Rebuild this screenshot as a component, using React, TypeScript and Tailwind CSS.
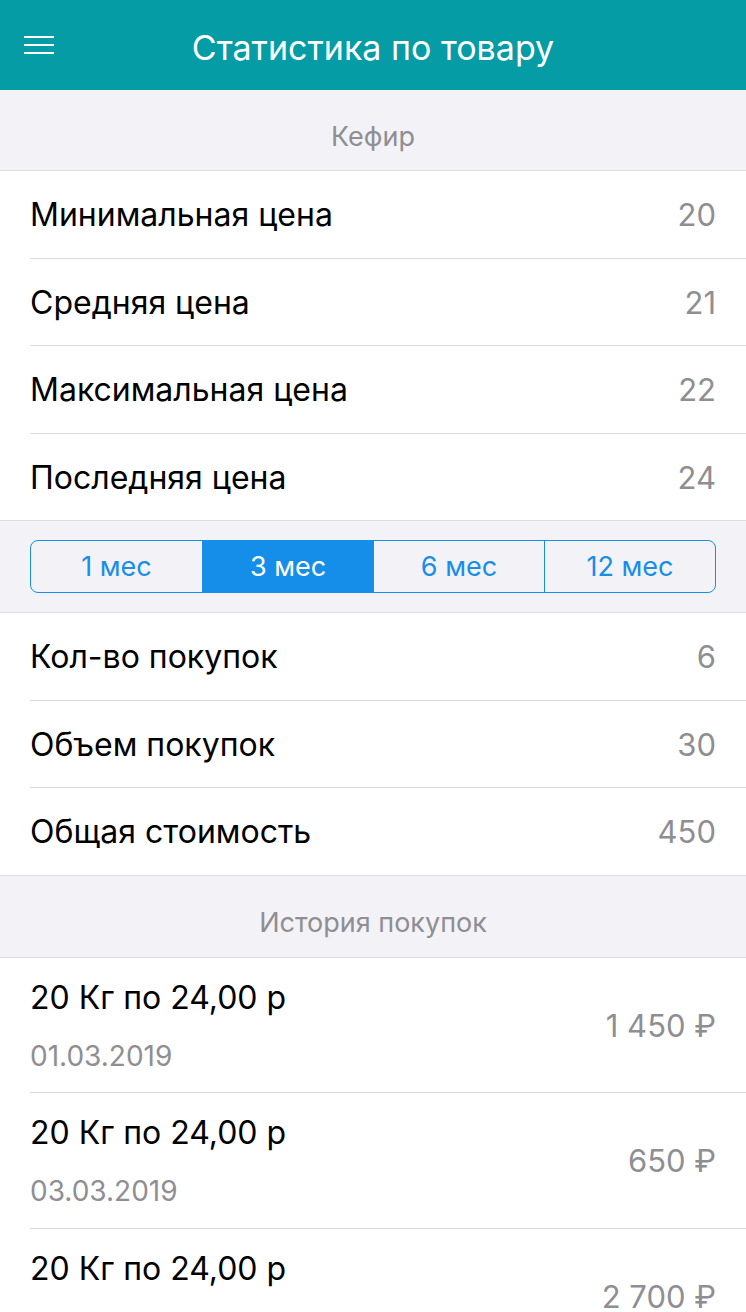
import React from 'react';

const font = { fontFamily: 'Inter, Roboto, "Noto Sans", sans-serif' };

const priceRows = [
    { label: 'Минимальная цена', value: '20' },
    { label: 'Средняя цена', value: '21' },
    { label: 'Максимальная цена', value: '22' },
    { label: 'Последняя цена', value: '24' },
];

const totalRows = [
    { label: 'Кол-во покупок', value: '6' },
    { label: 'Объем покупок', value: '30' },
    { label: 'Общая стоимость', value: '450' },
];

const history = [
    { title: '20 Кг по 24,00 р', date: '01.03.2019', sum: '1 450 ₽' },
    { title: '20 Кг по 24,00 р', date: '03.03.2019', sum: '650 ₽' },
    { title: '20 Кг по 24,00 р', date: '05.03.2019', sum: '2 700 ₽' },
];

const periods = ['1 мес', '3 мес', '6 мес', '12 мес'];

const SectionTitle: React.FC<{ text: string; h: string }> = ({ text, h }) => (
    <div className={`${h} bg-[#f3f3f7] border-b border-[#dcdce0] flex items-center justify-center`}>
        <span className="text-[27px] text-[#8e8e93] pt-[14px]">{text}</span>
    </div>
);

// последняя строка группы — линия на всю ширину
const Row: React.FC<{ label: string; value: string; last?: boolean }> = ({ label, value, last }) => (
    <div className={last ? 'pl-[30px] border-b border-[#dcdce0]' : 'pl-[30px]'}>
        <div className={`flex items-center justify-between pr-[30px] ${last ? 'h-[86.5px]' : 'h-[87.5px] border-b border-[#dcdce0]'}`}>
            <span className="text-[32px] text-black pt-[2px]">{label}</span>
            <span className="text-[31px] text-[#8e8e93] pt-[2px]">{value}</span>
        </div>
    </div>
);

export default function App() {
    return (
        <div className="w-[746px] h-[1312px] overflow-hidden bg-white" style={font}>
            {/* шапка */}
            <div className="h-[90px] bg-[#069ca6] flex items-center relative">
                <button className="absolute left-[24px] top-[36px] w-[30px] flex flex-col gap-[6px]">
                    <span className="block h-[2px] bg-white" />
                    <span className="block h-[2px] bg-white" />
                    <span className="block h-[2px] bg-white" />
                </button>
                <h1 className="w-full text-center text-[34px] text-white pt-[4px]">Статистика по товару</h1>
            </div>

            <SectionTitle text="Кефир" h="h-[81px]" />

            {priceRows.map((r, i) => (
                <Row key={r.label} {...r} last={i === priceRows.length - 1} />
            ))}

            {/* переключатель периода */}
            <div className="h-[92px] bg-[#f3f3f7] border-b border-[#dcdce0] px-[30px] pt-[19px]">
                <div className="h-[53px] grid grid-cols-4 border-[1.5px] border-[#1a8de6] rounded-[8px] overflow-hidden">
                    {periods.map((p, i) => (
                        <div
                            key={p}
                            className={`flex items-center justify-center text-[27px] pt-[2px] ${i > 0 ? 'border-l-[1.5px] border-[#1a8de6]' : ''} ${i === 1 ? 'bg-[#148ee8] text-white' : 'text-[#1a8de6]'}`}
                        >
                            {p}
                        </div>
                    ))}
                </div>
            </div>

            {totalRows.map((r, i) => (
                <Row key={r.label} {...r} last={i === totalRows.length - 1} />
            ))}

            <SectionTitle text="История покупок" h="h-[82px]" />

            {history.map((h) => (
                <div key={h.date} className="pl-[30px]">
                    <div className="h-[135.5px] flex items-start justify-between pr-[30px] border-b border-[#dcdce0]">
                        <div className="flex flex-col pt-[21px]">
                            <span className="text-[32px] leading-[38px] text-black">{h.title}</span>
                            <span className="text-[28px] leading-[34px] text-[#8e8e93] mt-[22px]">{h.date}</span>
                        </div>
                        <span className="text-[31px] leading-[38px] text-[#8e8e93] pt-[49px]">{h.sum}</span>
                    </div>
                </div>
            ))}
        </div>
    );
}
